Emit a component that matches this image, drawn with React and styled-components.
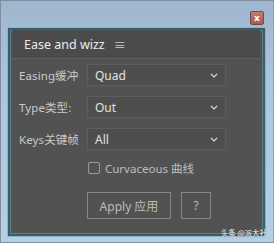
import styled, { createGlobalStyle } from "styled-components";
import { Fragment } from "react";

const Global = createGlobalStyle`
    html, body {
        margin: 0;
        padding: 0;
        background: #a9c1d9;
    }
    * { box-sizing: border-box; }
`

const Window = styled.div`
    position: relative;
    width: 274px;
    height: 243px;
    border: 1px solid #7f8e9c;
    border-right-color: #8fa3b6;
    background: linear-gradient(180deg, #9fb6cf 0%, #afc7de 40%, #b6cee4 100%);
    padding: 0 8px 6px 7px;
    display: flex;
    flex-direction: column;
    font-family: "Noto Sans", "Noto Sans CJK SC", sans-serif;
`

const TitleBar = styled.div`
    height: 27px;
    display: flex;
    justify-content: flex-end;
    align-items: flex-start;
    padding-top: 10px;
    padding-right: 1px;
`

const Close = styled.div`
    width: 14px;
    height: 14px;
    background: linear-gradient(180deg, #c47c72, #a95a52);
    border: 1px solid #7a4843;
    border-radius: 2px;
    color: #fff;
    font: bold 9px/12px "DejaVu Sans", sans-serif;
    text-align: center;
`

const Panel = styled.div`
    flex: 1;
    background: #525252;
    border: 2px solid #33606b;
    box-shadow: inset 0 0 0 1px #5d7d88, 0 0 0 1px #8fb4c6;
    display: flex;
    flex-direction: column;
`

const Header = styled.div`
    height: 29px;
    margin: 0 3px;
    background: #4b4b4b;
    border-bottom: 1px solid #5f5f5f;
    display: flex;
    align-items: center;
    gap: 9px;
    padding-left: 11px;
    color: #ececec;
    font-size: 12.5px;
`

const Menu = styled.span`
    font-size: 12px;
    color: #cfcfcf;
    margin-top: 1px;
`

const Form = styled.div`
    display: grid;
    grid-template-columns: 69px 139px;
    row-gap: 10px;
    padding: 5px 0 0 8px;
    align-items: center;
`

const Label = styled.div`
    font-size: 11.5px;
    color: #c9c9c9;
    white-space: nowrap;
    padding-left: 1px;
    letter-spacing: 0.1px;
`

const Select = styled.div`
    height: 22px;
    border: 1px solid #5e5e5e;
    background: #4e4e4e;
    display: flex;
    align-items: center;
    justify-content: space-between;
    padding: 0 7px 0 7px;
    color: #e2e2e2;
    font-size: 12px;
`

const Check = styled.label`
    grid-column: 2;
    display: flex;
    align-items: center;
    gap: 5px;
    padding-left: 1px;
    color: #bdbdbd;
    font-size: 11.5px;
`

const Box = styled.span`
    width: 12px;
    height: 12px;
    border: 1px solid #9a9a9a;
    border-radius: 2px;
`

const Buttons = styled.div`
    display: flex;
    gap: 10px;
    padding: 16px 0 0 77px;
`

const Button = styled.div`
    width: ${p => p.$w}px;
    height: 27px;
    border: 1px solid #868686;
    color: #bcbcbc;
    font-size: 12px;
    display: flex;
    align-items: center;
    justify-content: center;
`

const Watermark = styled.div`
    position: absolute;
    right: 6px;
    bottom: 4px;
    color: #f4f4f4;
    font-size: 7.5px;
    text-shadow: 0 0 1px #555;
    font-family: "Noto Sans CJK SC", sans-serif;
`

const Chevron = () => (
    <svg width="8" height="5" viewBox="0 0 8 5">
        <path d="M1 1 L4 4 L7 1" fill="none" stroke="#d8d8d8" strokeWidth="1.2" />
    </svg>
)

const rows = [
    ["Easing缓冲", "Quad"],
    ["Type类型:", "Out"],
    ["Keys关键帧", "All"],
]

export default function App() {
    return (
        <>
            <Global />
            <Window>
                <TitleBar>
                    <Close>x</Close>
                </TitleBar>
                <Panel>
                    <Header>
                        Ease and wizz
                        <Menu>≡</Menu>
                    </Header>
                    <Form>
                        {rows.map(([label, value]) => (
                            <Fragment key={label}>
                                <Label>{label}</Label>
                                <Select>
                                    {value}
                                    <Chevron />
                                </Select>
                            </Fragment>
                        ))}
                        <Check>
                            <Box />
                            Curvaceous 曲线
                        </Check>
                    </Form>
                    <Buttons>
                        <Button $w={84}>Apply 应用</Button>
                        <Button $w={30}>?</Button>
                    </Buttons>
                </Panel>
                <Watermark>头条 @派大社</Watermark>
            </Window>
        </>
    )
}
